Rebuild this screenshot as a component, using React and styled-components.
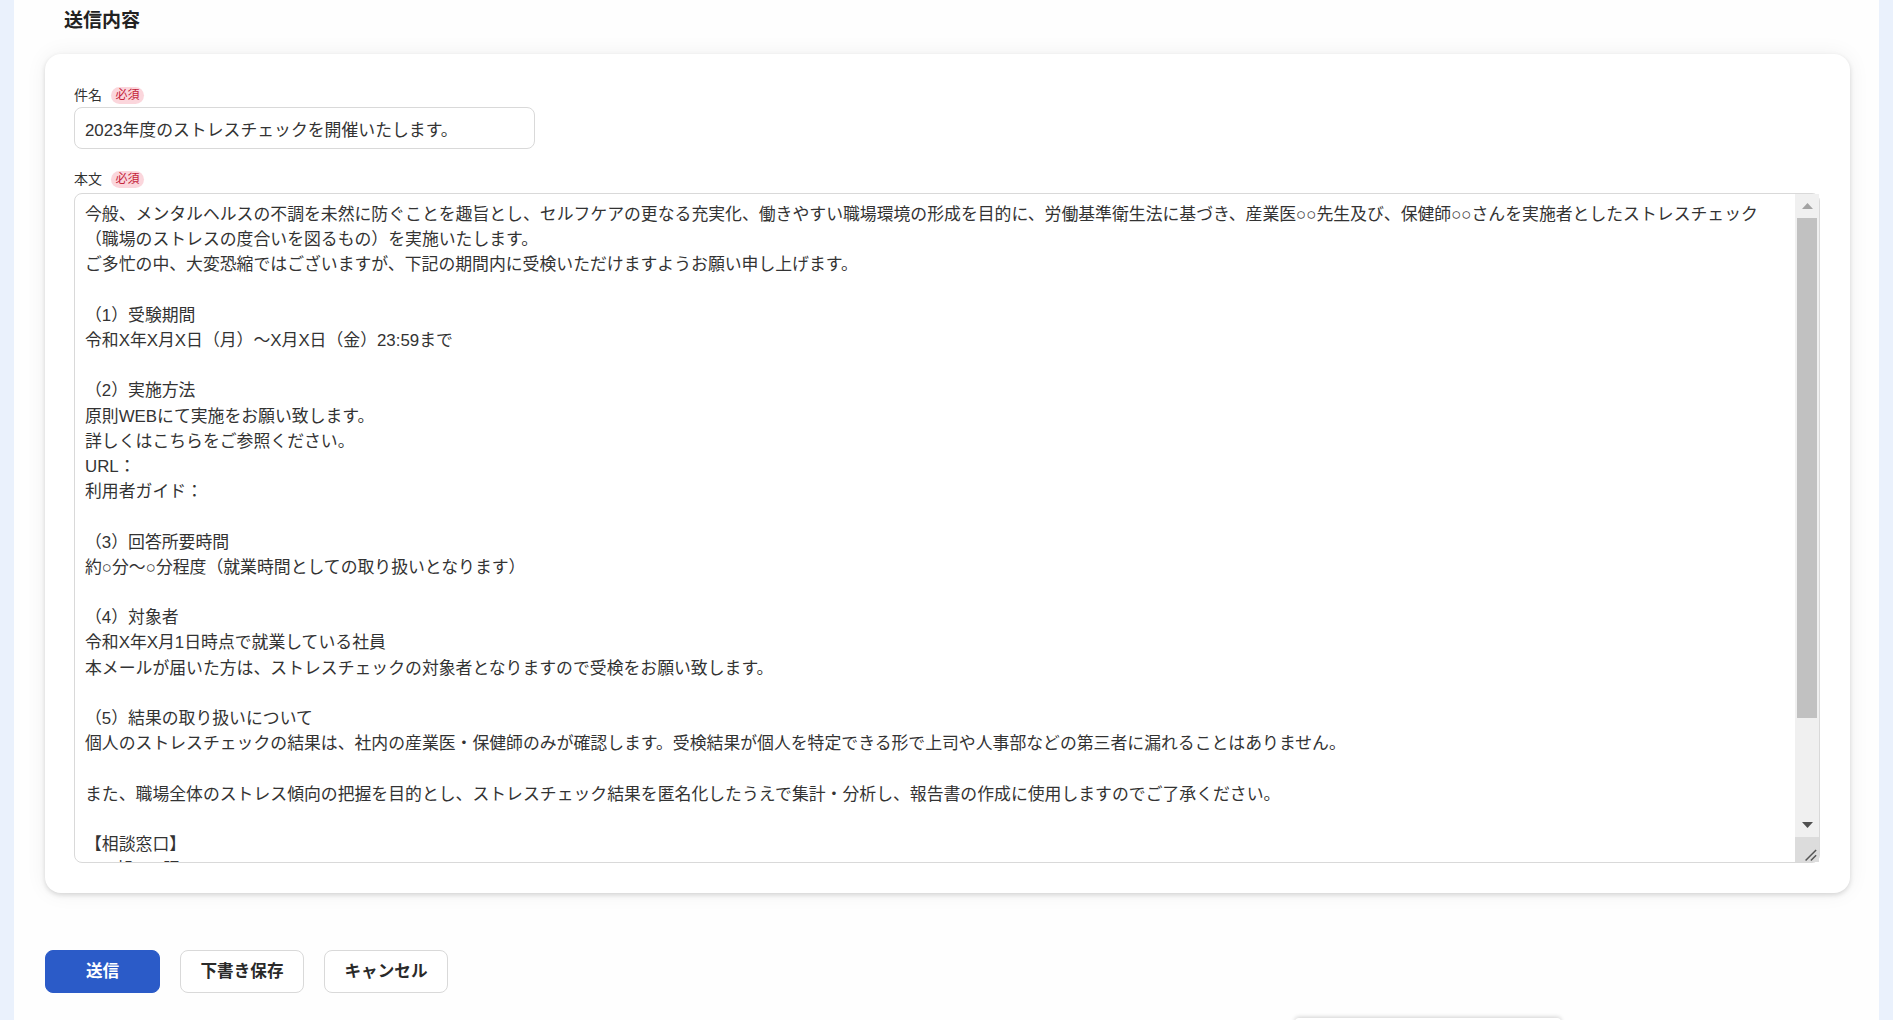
import React from "react";
import styled, { createGlobalStyle } from "styled-components";

const GlobalStyle = createGlobalStyle`
  html, body {
    margin: 0;
    padding: 0;
    background: #eaf1fc;
    font-family: "Liberation Sans", "Noto Sans CJK JP", sans-serif;
    color: #333;
    overflow: hidden;
  }
  * {
    box-sizing: border-box;
  }
`;

const Page = styled.div`
  min-height: 100vh;
  padding: 0 14px;
`;

const Main = styled.main`
  min-height: 100vh;
  background: #fefefe;
  padding: 5px 29px 0 31px;
`;

const SectionTitle = styled.h2`
  margin: 0 0 22px 19px;
  font-family: "Noto Sans CJK JP", sans-serif;
  font-size: 19px;
  line-height: 27px;
  font-weight: 700;
  color: #222;
`;

const Card = styled.section`
  background: #fff;
  border-radius: 16px;
  padding: 33px 30px 30px 29px;
  box-shadow: 0 2px 5px rgba(0, 0, 0, 0.14), 0 0 22px rgba(0, 0, 0, 0.06);
`;

const Field = styled.div`
  & + & {
    margin-top: 22px;
  }
`;

const LabelRow = styled.div`
  display: flex;
  align-items: center;
  gap: 9px;
  height: 16px;
  margin-bottom: ${(p) => (p.$tight ? 4 : 6)}px;
`;

const Label = styled.label`
  font-size: 14px;
  line-height: 16px;
  color: #333;
`;

const Required = styled.span`
  display: inline-flex;
  align-items: center;
  height: 17px;
  padding: 0 4.5px;
  border-radius: 8.5px;
  background: #fbd6dc;
  color: #c4233a;
  font-size: 12px;
  line-height: 17px;
`;

const TextInput = styled.input`
  display: block;
  width: 461px;
  height: 42px;
  padding: 0 10px;
  border: 1px solid #d9d9d9;
  border-radius: 8px;
  font-family: inherit;
  font-size: 16.85px;
  color: #333;
  background: #fff;
  outline: none;
`;

const TextAreaFrame = styled.div`
  position: relative;
  height: 670px;
`;

const TextArea = styled.textarea`
  display: block;
  width: 100%;
  height: 100%;
  padding: 8px 34px 6px 10px;
  border: 1px solid #d9d9d9;
  border-radius: 8px;
  font-family: inherit;
  font-size: 16.85px;
  line-height: 25.2px;
  color: #333;
  background: #fff;
  outline: none;
  resize: none;
  overflow: hidden;
  text-spacing-trim: space-all;
`;

/* scrollbar drawn over the right edge of the textarea */
const ScrollBar = styled.div`
  position: absolute;
  top: 1px;
  right: 1px;
  bottom: 1px;
  width: 24px;
  display: flex;
  flex-direction: column;
  background: #f0f0f0;
  pointer-events: none;
`;

const ScrollButton = styled.div`
  height: 24px;
  flex: none;
  display: flex;
  align-items: center;
  justify-content: center;
`;

const Track = styled.div`
  flex: 1;
  padding: 0 2px;
`;

const Thumb = styled.div`
  height: 84%;
  background: #c1c1c1;
`;

const Resizer = styled.div`
  height: 25px;
  flex: none;
  background: #dcdcdc;
  display: flex;
  align-items: center;
  justify-content: center;
`;

const Actions = styled.div`
  display: flex;
  gap: 20px;
  margin-top: 57px;
`;

const Button = styled.button`
  height: 43px;
  min-width: ${(p) => (p.$primary ? 115 : 124)}px;
  padding: 0 18px 3px;
  border-radius: 8px;
  border: 1px solid ${(p) => (p.$primary ? "#2b5bc8" : "#d9d9d9")};
  background: ${(p) => (p.$primary ? "#2b5bc8" : "#fff")};
  color: ${(p) => (p.$primary ? "#fff" : "#2a2a2a")};
  font-family: "Noto Sans CJK JP", sans-serif;
  font-size: 16.6px;
  line-height: 1;
  font-weight: 700;
  cursor: pointer;
`;

const FloatingPanel = styled.div`
  position: fixed;
  left: 1295px;
  top: 1018px;
  width: 266px;
  height: 60px;
  background: #fff;
  border-radius: 4px;
  box-shadow: 0 -1px 4px rgba(0, 0, 0, 0.18);
`;

const bodyText = [
  "今般、メンタルヘルスの不調を未然に防ぐことを趣旨とし、セルフケアの更なる充実化、働きやすい職場環境の形成を目的に、労働基準衛生法に基づき、産業医○○先生及び、保健師○○さんを実施者としたストレスチェック（職場のストレスの度合いを図るもの）を実施いたします。",
  "ご多忙の中、大変恐縮ではございますが、下記の期間内に受検いただけますようお願い申し上げます。",
  "",
  "（1）受験期間",
  "令和X年X月X日（月）～X月X日（金）23:59まで",
  "",
  "（2）実施方法",
  "原則WEBにて実施をお願い致します。",
  "詳しくはこちらをご参照ください。",
  "URL：",
  "利用者ガイド：",
  "",
  "（3）回答所要時間",
  "約○分～○分程度（就業時間としての取り扱いとなります）",
  "",
  "（4）対象者",
  "令和X年X月1日時点で就業している社員",
  "本メールが届いた方は、ストレスチェックの対象者となりますので受検をお願い致します。",
  "",
  "（5）結果の取り扱いについて",
  "個人のストレスチェックの結果は、社内の産業医・保健師のみが確認します。受検結果が個人を特定できる形で上司や人事部などの第三者に漏れることはありません。",
  "",
  "また、職場全体のストレス傾向の把握を目的とし、ストレスチェック結果を匿名化したうえで集計・分析し、報告書の作成に使用しますのでご了承ください。",
  "",
  "【相談窓口】",
  "○○○部○○○課",
  "担当：○○",
  "内線：○○○○",
  "メール：",
].join("\n");

const App = () => {
  return (
    <>
      <GlobalStyle />
      <Page>
        <Main>
          <SectionTitle>送信内容</SectionTitle>
          <Card>
            <Field>
              <LabelRow $tight>
                <Label htmlFor="subject">件名</Label>
                <Required>必須</Required>
              </LabelRow>
              <TextInput
                id="subject"
                defaultValue="2023年度のストレスチェックを開催いたします。"
              />
            </Field>
            <Field>
              <LabelRow>
                <Label htmlFor="body">本文</Label>
                <Required>必須</Required>
              </LabelRow>
              <TextAreaFrame>
                <TextArea id="body" defaultValue={bodyText} />
                <ScrollBar aria-hidden="true">
                  <ScrollButton>
                    <svg width="11" height="6" viewBox="0 0 11 6">
                      <path d="M5.5 0L11 6H0z" fill="#a3a3a3" />
                    </svg>
                  </ScrollButton>
                  <Track>
                    <Thumb />
                  </Track>
                  <ScrollButton>
                    <svg width="11" height="6" viewBox="0 0 11 6">
                      <path d="M0 0h11L5.5 6z" fill="#505050" />
                    </svg>
                  </ScrollButton>
                  <Resizer>
                    <svg width="25" height="25" viewBox="0 0 25 25">
                      <path
                        d="M22 13L11 24M22 18.5L16.5 24"
                        stroke="#555"
                        strokeWidth="1.6"
                        fill="none"
                      />
                    </svg>
                  </Resizer>
                </ScrollBar>
              </TextAreaFrame>
            </Field>
          </Card>
          <Actions>
            <Button $primary>送信</Button>
            <Button>下書き保存</Button>
            <Button>キャンセル</Button>
          </Actions>
        </Main>
      </Page>
      <FloatingPanel />
    </>
  );
};

export default App;
